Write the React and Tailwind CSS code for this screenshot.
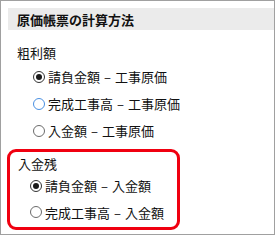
import React from 'react'

const font = { fontFamily: '"Noto Sans CJK JP", "Noto Sans", sans-serif' }

function Radio({ checked, focus }) {
  return (
    <span
      className={
        'flex items-center justify-center w-[12px] h-[12px] rounded-full border bg-white shrink-0 ' +
        (focus ? 'border-[#4a90e2]' : checked ? 'border-[#333333]' : 'border-[#6b6b6b]')
      }
    >
      {checked && <span className="w-[6px] h-[6px] rounded-full bg-[#1a1a1a]" />}
    </span>
  )
}

function Option({ left, right, checked, focus, className }) {
  return (
    <div className={'flex items-center gap-[3px] ' + className}>
      <Radio checked={checked} focus={focus} />
      <span className="leading-none flex items-center">
        {left}
        <span className="px-[4px]">–</span>
        {right}
      </span>
    </div>
  )
}

export default function App() {
  return (
    <div
      className="w-[275px] h-[235px] border border-[#a0a0a0] bg-white text-[13px] text-[#111] flex flex-col overflow-hidden"
      style={font}
    >
      <div className="mt-[7px] ml-[7px] h-[22px] bg-[#ebebeb] flex items-center pl-[9px] font-bold leading-none shrink-0">
        原価帳票の計算方法
      </div>

      <div className="mt-[12px] h-[21px] flex items-center pl-[16px] leading-none shrink-0">粗利額</div>
      <Option className="h-[27px] pl-[32px] shrink-0" left="請負金額" right="工事原価" checked />
      <Option className="h-[27px] pl-[32px] shrink-0" left="完成工事高" right="工事原価" focus />
      <Option className="h-[27px] pl-[32px] shrink-0" left="入金額" right="工事原価" />

      <div className="mt-[5px] ml-[6px] w-[173px] h-[81px] border-[3px] border-[#f00010] rounded-[9px] flex flex-col shrink-0">
        <div className="h-[22px] flex items-center pl-[8px] leading-none">入金残</div>
        <Option className="h-[23px] pl-[20px]" left="請負金額" right="入金額" checked />
        <Option className="h-[26px] pt-[4px] pl-[20px]" left="完成工事高" right="入金額" />
      </div>
    </div>
  )
}
